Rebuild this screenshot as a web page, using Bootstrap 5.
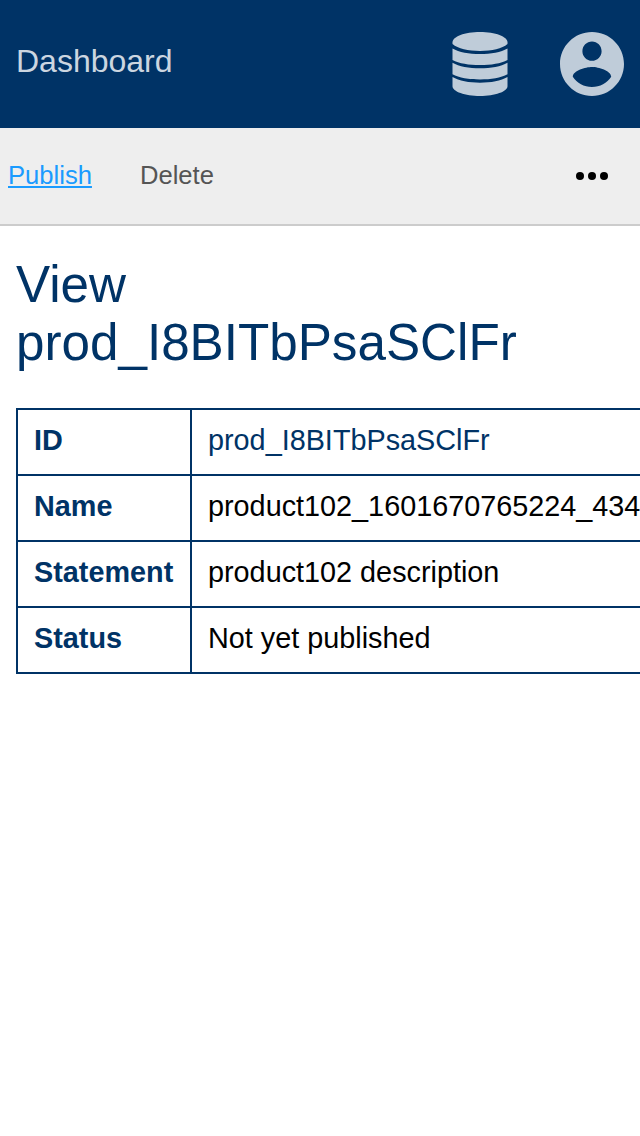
<!DOCTYPE html>
<html lang="en">
<head>
<meta charset="utf-8">
<meta name="viewport" content="width=device-width, initial-scale=1">
<title>Dashboard</title>
<link href="https://cdn.jsdelivr.net/npm/bootstrap@5.3.0/dist/css/bootstrap.min.css" rel="stylesheet">
<style>
  body { font-family: "Liberation Sans", Arial, sans-serif; color: #000; }
  .topbar { height: 128px; background: #036; color: #bfccd9; }
  .topbar .brand { color: #ccd6e0; font-size: 32px; line-height: 36px; padding-bottom: 6px; }
  .topbar .tools { gap: 52px; }
  .actions { height: 98px; background: #eee; border-bottom: 2px solid #ccc; font-size: 25.6px; line-height: 30px; }
  .actions .items { gap: 48px; padding-bottom: 2px; }
  .actions .publish { color: #1a9bff; text-decoration-thickness: 2px; text-underline-offset: 2px; }
  .actions .remove { color: #555; }
  .page-title { color: #036; font-size: 51.2px; line-height: 58px; font-weight: 400; margin: 30px 0 36px; }
  .details { width: 720px; border-collapse: collapse; font-size: 28.8px; line-height: 32px; white-space: nowrap; }
  .details th, .details td { border: 2px solid #036; padding: 14px 16px 18px; height: 66px; }
  .details th { width: 174px; color: #036; }
  .details a { color: #036; }
</style>
</head>
<body class="bg-white">
<header class="topbar d-flex align-items-center justify-content-between px-3">
  <a class="brand text-decoration-none" href="#">Dashboard</a>
  <div class="tools d-flex">
    <svg width="56" height="64" viewBox="0 0 56 64" fill="currentColor" aria-label="Data">
      <path d="M28 0C43.300 0 55.500 4.600 55.500 10.300V12C50 16.800 40 18.900 28 18.900S6 16.800 .5 12V10.300C.5 4.600 12.700 0 28 0Z"/>
      <path d="M.5 16.500C7 20.400 17 22.100 28 22.100S49 20.400 55.500 16.500V28C49 31.500 39 33.100 28 33.100S7 31.500 .5 28Z"/>
      <path d="M.5 30.700C7 34.600 17 36.300 28 36.300S49 34.600 55.500 30.700V42.200C49 45.700 39 47.400 28 47.400S7 45.700 .5 42.200Z"/>
      <path d="M.5 45C7 48.900 17 50.700 28 50.700S49 48.900 55.500 45V54.300C55.500 59.600 43 64 28 64S.5 59.600 .5 54.300Z"/>
    </svg>
    <svg width="64" height="64" viewBox="2 2 20 20" fill="currentColor" aria-label="Account">
      <path d="M12 2C6.480 2 2 6.480 2 12s4.480 10 10 10 10-4.480 10-10S17.520 2 12 2zm0 3c1.660 0 3 1.340 3 3s-1.340 3-3 3-3-1.340-3-3 1.340-3 3-3zm0 14.200c-2.500 0-4.710-1.280-6-3.220.030-1.990 4-3.080 6-3.080 1.990 0 5.970 1.090 6 3.080-1.290 1.940-3.500 3.220-6 3.220z"/>
    </svg>
  </div>
</header>
<nav class="actions d-flex align-items-center justify-content-between ps-2">
  <div class="items d-flex">
    <a class="publish" href="#">Publish</a>
    <a class="remove text-decoration-none" href="#">Delete</a>
  </div>
  <svg class="me-3" width="64" height="32" viewBox="0 0 64 32" aria-label="More">
    <circle cx="20" cy="16" r="4"/><circle cx="32" cy="16" r="4"/><circle cx="44" cy="16" r="4"/>
  </svg>
</nav>
<main class="ps-3 overflow-hidden">
  <h1 class="page-title">View<br>prod_I8BITbPsaSClFr</h1>
  <table class="details">
    <tbody>
      <tr><th scope="row">ID</th><td><a class="text-decoration-none" href="#">prod_I8BITbPsaSClFr</a></td></tr>
      <tr><th scope="row">Name</th><td>product102_1601670765224_434</td></tr>
      <tr><th scope="row">Statement</th><td>product102 description</td></tr>
      <tr><th scope="row">Status</th><td>Not yet published</td></tr>
    </tbody>
  </table>
</main>
<script src="https://cdn.jsdelivr.net/npm/bootstrap@5.3.0/dist/js/bootstrap.bundle.min.js"></script>
</body>
</html>
